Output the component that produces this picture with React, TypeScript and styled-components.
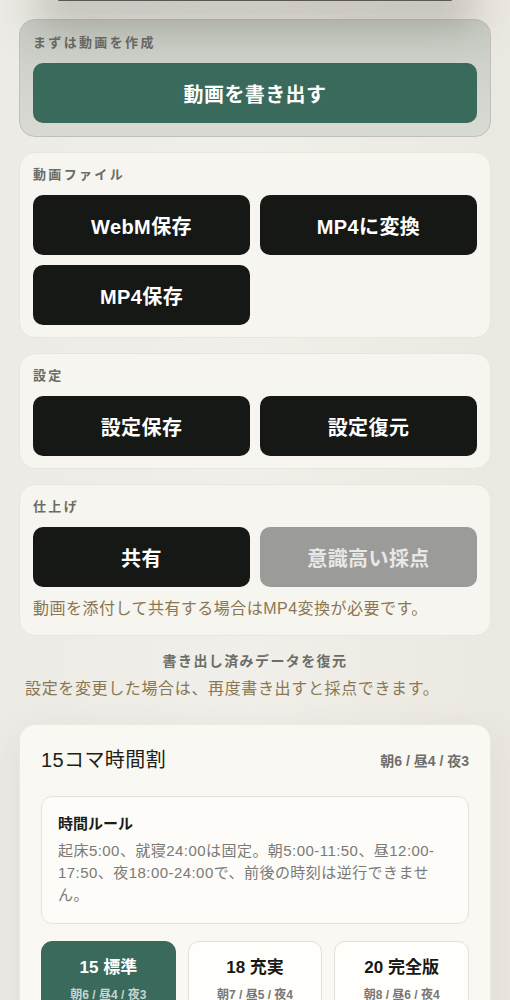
import styled, { createGlobalStyle } from "styled-components";

const GlobalStyle = createGlobalStyle`
  html, body {
    margin: 0;
    padding: 0;
    background: #efede7;
  }
  body {
    font-family: "Liberation Sans", "Noto Sans CJK JP", sans-serif;
    color: #1d1f1c;
  }
`;

const Page = styled.div`
  min-height: 1000px;
  background: linear-gradient(90deg, #ecebe5 0%, #f1efe9 50%, #ebe8e1 100%);
  overflow: hidden;
`;

const Preview = styled.div`
  position: relative;
  z-index: 2;
  height: 1px;
  margin: 0 58px;
  background: #5b5853;
  border-radius: 0 0 12px 12px;
  box-shadow: 0 4px 40px 22px rgba(70, 64, 54, 0.28);
`;

const Main = styled.div`
  display: flex;
  flex-direction: column;
  padding: 18px 19px 0;
`;

const Panel = styled.section<{ $accent?: boolean }>`
  display: flex;
  flex-direction: column;
  gap: 11px;
  padding: ${(p) => (p.$accent ? "14px 13px 13px" : "13px 13px 12px")};
  margin-bottom: 15px;
  border-radius: 16px;
  border: 1px solid ${(p) => (p.$accent ? "#bcc2b9" : "#e8e5dd")};
  background: ${(p) =>
    p.$accent
      ? "linear-gradient(180deg, #c9cdc5 0%, #d9dad3 100%)"
      : "#f7f5f0"};
`;

const PanelLabel = styled.div`
  font-size: 13px;
  font-weight: 700;
  line-height: 18px;
  letter-spacing: 0.18em;
  color: #6a6b66;
`;

const Grid = styled.div`
  display: grid;
  grid-template-columns: 1fr 1fr;
  gap: 10px;
`;

const Button = styled.button<{ $tone?: "green" | "dark" | "muted" }>`
  height: 60px;
  border: none;
  border-radius: 10px;
  font-family: inherit;
  font-size: 20px;
  font-weight: 700;
  letter-spacing: 0.02em;
  cursor: pointer;
  background: ${(p) =>
    p.$tone === "green" ? "#396a5c" : p.$tone === "muted" ? "#9b9b99" : "#161815"};
  color: ${(p) => (p.$tone === "muted" ? "#e8e8e6" : "#ffffff")};
`;

const Note = styled.p`
  margin: 0 0 3px;
  font-size: 16px;
  line-height: 22px;
  letter-spacing: 0.03em;
  color: #8a7752;
`;

const Restore = styled.div`
  display: flex;
  flex-direction: column;
  align-items: center;
  gap: 7px;
  margin-bottom: 24px;
`;

const RestoreTitle = styled.div`
  font-size: 14px;
  font-weight: 700;
  line-height: 20px;
  letter-spacing: 0.1em;
  color: #6c6d69;
`;

const RestoreNote = styled.p`
  align-self: flex-start;
  margin: 0;
  padding-left: 6px;
  font-size: 16px;
  line-height: 22px;
  letter-spacing: 0.04em;
  color: #8a7752;
`;

const Schedule = styled.section`
  padding: 21px 21px 24px;
  border-radius: 16px;
  border: 1px solid #ebe8e0;
  background: #faf8f2;
  box-shadow: 0 10px 40px rgba(60, 52, 40, 0.08);
`;

const ScheduleHead = styled.div`
  display: flex;
  align-items: center;
  justify-content: space-between;
  margin-bottom: 22px;
`;

const ScheduleTitle = styled.h2`
  margin: 0;
  font-size: 20px;
  font-weight: 400;
  line-height: 28px;
  letter-spacing: 0.02em;
  color: #1d1e1b;
`;

const Counts = styled.span`
  font-size: 14px;
  font-weight: 700;
  color: #6f6f6b;
`;

const Rule = styled.div`
  padding: 15px 16px 17px;
  border-radius: 11px;
  border: 1px solid #e6e2d9;
  background: #fdfcf9;
  margin-bottom: 17px;
`;

const RuleTitle = styled.div`
  font-size: 15px;
  font-weight: 700;
  line-height: 24px;
  margin-bottom: 4px;
  color: #1b1c1a;
`;

const RuleText = styled.p`
  margin: 0;
  font-size: 15px;
  line-height: 22px;
  letter-spacing: 0.03em;
  color: #7a7a76;
`;

const Options = styled.div`
  display: grid;
  grid-template-columns: repeat(3, 1fr);
  gap: 12px;
`;

const Option = styled.button<{ $active?: boolean }>`
  display: flex;
  flex-direction: column;
  align-items: center;
  gap: 5px;
  padding: 14px 6px 16px;
  border-radius: 11px;
  font-family: inherit;
  border: 1px solid ${(p) => (p.$active ? "#396a5c" : "#e4e0d7")};
  background: ${(p) => (p.$active ? "#396a5c" : "#fffefb")};
  color: ${(p) => (p.$active ? "#ffffff" : "#161815")};
  cursor: pointer;
`;

const OptionName = styled.span`
  font-size: 17px;
  font-weight: 700;
  line-height: 24px;
`;

const OptionCounts = styled.span<{ $active?: boolean }>`
  font-size: 12px;
  font-weight: 700;
  color: ${(p) => (p.$active ? "rgba(255,255,255,0.72)" : "#777773")};
`;

const plans = [
  { name: "15 標準", counts: "朝6 / 昼4 / 夜3", active: true },
  { name: "18 充実", counts: "朝7 / 昼5 / 夜4", active: false },
  { name: "20 完全版", counts: "朝8 / 昼6 / 夜4", active: false },
];

export default function App() {
  return (
    <Page>
      <GlobalStyle />
      <Preview />
      <Main>
        <Panel $accent>
          <PanelLabel>まずは動画を作成</PanelLabel>
          <Button $tone="green">動画を書き出す</Button>
        </Panel>

        <Panel>
          <PanelLabel>動画ファイル</PanelLabel>
          <Grid>
            <Button>WebM保存</Button>
            <Button>MP4に変換</Button>
            <Button>MP4保存</Button>
          </Grid>
        </Panel>

        <Panel>
          <PanelLabel>設定</PanelLabel>
          <Grid>
            <Button>設定保存</Button>
            <Button>設定復元</Button>
          </Grid>
        </Panel>

        <Panel>
          <PanelLabel>仕上げ</PanelLabel>
          <Grid>
            <Button>共有</Button>
            <Button $tone="muted" disabled>
              意識高い採点
            </Button>
          </Grid>
          <Note>動画を添付して共有する場合はMP4変換が必要です。</Note>
        </Panel>

        <Restore>
          <RestoreTitle>書き出し済みデータを復元</RestoreTitle>
          <RestoreNote>設定を変更した場合は、再度書き出すと採点できます。</RestoreNote>
        </Restore>

        <Schedule>
          <ScheduleHead>
            <ScheduleTitle>15コマ時間割</ScheduleTitle>
            <Counts>朝6 / 昼4 / 夜3</Counts>
          </ScheduleHead>
          <Rule>
            <RuleTitle>時間ルール</RuleTitle>
            <RuleText>
              起床5:00、就寝24:00は固定。朝5:00-11:50、昼12:00-17:50、夜18:00-24:00で、前後の時刻は逆行できません。
            </RuleText>
          </Rule>
          <Options>
            {plans.map((p) => (
              <Option key={p.name} $active={p.active}>
                <OptionName>{p.name}</OptionName>
                <OptionCounts $active={p.active}>{p.counts}</OptionCounts>
              </Option>
            ))}
          </Options>
        </Schedule>
      </Main>
    </Page>
  );
}
